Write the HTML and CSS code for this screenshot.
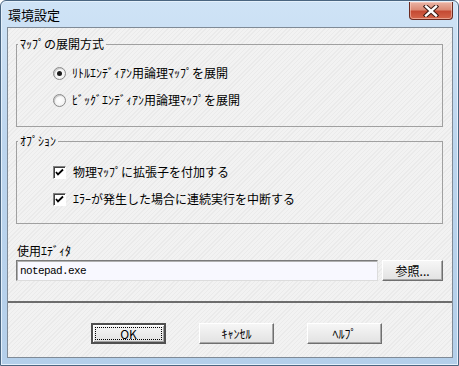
FILE: index.html
```html
<!DOCTYPE html>
<html lang="ja">
<head>
    <meta charset="UTF-8">
    <title>環境設定</title>
    <link rel="stylesheet" href="styles.css">
</head>
<body>
    <div class="window">
        <div class="titlebar">
            <span class="title">環境設定</span>
            <button class="close" aria-label="閉じる">
                <svg width="16" height="12" viewBox="0 0 16 12">
                    <path d="M3 1.5 L13 10.5 M13 1.5 L3 10.5" stroke="#3a1a14" stroke-width="4.4" stroke-linecap="square"/>
                    <path d="M3 1.5 L13 10.5 M13 1.5 L3 10.5" stroke="#fff" stroke-width="2.4" stroke-linecap="square"/>
                </svg>
            </button>
        </div>

        <div class="client">
            <div class="panel">
                <fieldset class="group">
                    <legend>ﾏｯﾌﾟの展開方式</legend>
                    <label class="option">
                        <span class="radio checked"></span>
                        ﾘﾄﾙｴﾝﾃﾞｨｱﾝ用論理ﾏｯﾌﾟを展開
                    </label>
                    <label class="option">
                        <span class="radio"></span>
                        ﾋﾞｯｸﾞｴﾝﾃﾞｨｱﾝ用論理ﾏｯﾌﾟを展開
                    </label>
                </fieldset>

                <fieldset class="group group-options">
                    <legend>ｵﾌﾟｼｮﾝ</legend>
                    <label class="option">
                        <span class="check">
                            <svg width="9" height="9" viewBox="0 0 9 9"><path d="M1 4 L3 6.5 L8 1.5" stroke="#000" stroke-width="1.8" fill="none"/></svg>
                        </span>
                        物理ﾏｯﾌﾟに拡張子を付加する
                    </label>
                    <label class="option">
                        <span class="check">
                            <svg width="9" height="9" viewBox="0 0 9 9"><path d="M1 4 L3 6.5 L8 1.5" stroke="#000" stroke-width="1.8" fill="none"/></svg>
                        </span>
                        ｴﾗｰが発生した場合に連続実行を中断する
                    </label>
                </fieldset>

                <div class="editor-label">使用ｴﾃﾞｨﾀ</div>
                <div class="editor-row">
                    <div class="textbox">notepad.exe</div>
                    <button class="btn btn-browse">参照...</button>
                </div>
            </div>

            <div class="actions">
                <button class="btn btn-default"><span class="focus">OK</span></button>
                <button class="btn">ｷｬﾝｾﾙ</button>
                <button class="btn">ﾍﾙﾌﾟ</button>
            </div>
        </div>
    </div>
</body>
</html>
```

FILE: styles.css
```css
body {
    margin: 0;
    padding: 0;
    font-family: "Noto Sans CJK JP", "Noto Sans", sans-serif;
    font-size: 12px;
    line-height: 14px;
    color: #000;
    background: #fff;
}

.window {
    width: 459px;
    height: 366px;
    box-sizing: border-box;
    display: flex;
    flex-direction: column;
    border: 1px solid #4a6580;
    border-radius: 6px 6px 0 0;
    background: linear-gradient(180deg, #cfe3f6 0%, #bcd5ee 40%, #b4cfea 100%);
    box-shadow: inset 0 0 0 1px #e4f0fb;
}

.titlebar {
    height: 26px;
    display: flex;
    align-items: flex-start;
    justify-content: space-between;
    padding: 0 5px 0 7px;
}

.title {
    margin-top: 7px;
    font-size: 13px;
    line-height: 14px;
}

.close {
    width: 44px;
    height: 18px;
    margin-top: 1px;
    padding: 0;
    border: 1px solid #6b2a20;
    border-top: none;
    border-radius: 0 0 4px 4px;
    background: linear-gradient(180deg, #e9b4a5 0%, #dc8b76 45%, #c54a33 55%, #d4664b 100%);
    box-shadow: inset 0 0 0 1px rgba(255, 220, 210, 0.5);
    display: flex;
    align-items: center;
    justify-content: center;
}

.client {
    flex: 1;
    margin: 0 5px 7px 6px;
    border: 1px solid #7f8a96;
    display: flex;
    flex-direction: column;
    background-color: #f0f0f0;
    background-image: repeating-linear-gradient(135deg, #f2f2f2 0px, #f2f2f2 2px, #eaeaea 2px, #eaeaea 3px);
}

.panel {
    height: 275px;
    box-sizing: border-box;
    padding: 9px 9px 0 8px;
    border-bottom: 2px solid #6d6d6d;
}

.group {
    margin: 0;
    padding: 15px 0 19px 0;
    border: 1px solid #a0a0a0;
    display: flex;
    flex-direction: column;
    gap: 13px;
}

.group legend {
    margin-left: 1px;
    padding: 0 2px 0 2px;
    line-height: 14px;
}

.group-options {
    margin-top: 7px;
    padding-top: 17px;
    padding-bottom: 17px;
}

.option {
    display: flex;
    align-items: center;
    gap: 4px;
    height: 14px;
    margin-left: 36px;
}

.radio {
    width: 11px;
    height: 11px;
    border-radius: 50%;
    border: 1px solid #8a8a8a;
    background: radial-gradient(circle, #fff 0%, #f4f4f4 60%, #dcdcdc 100%);
    box-shadow: inset 1px 1px 0 #c8c8c8;
    position: relative;
    margin-right: 2px;
}

.radio.checked::after {
    content: "";
    position: absolute;
    left: 3px;
    top: 3px;
    width: 5px;
    height: 5px;
    border-radius: 50%;
    background: #1b1b1b;
}

.check {
    width: 9px;
    height: 9px;
    padding: 1px;
    background: #fff;
    border: 1px solid;
    border-color: #808080 #ffffff #ffffff #808080;
    box-shadow: inset 1px 1px 0 #404040;
    display: flex;
    align-items: center;
    justify-content: center;
    margin-right: 3px;
}

.editor-label {
    margin-top: 20px;
    padding-left: 1px;
}

.editor-row {
    display: flex;
    gap: 4px;
    margin-top: 2px;
}

.textbox {
    width: 363px;
    height: 21px;
    box-sizing: border-box;
    padding: 3px 3px 0;
    background: #f8f8ff;
    border: 1px solid;
    border-color: #7a7a7a #dcdcdc #dcdcdc #7a7a7a;
    box-shadow: inset 1px 1px 0 #b0b0b0;
    font-family: "Liberation Mono", "DejaVu Sans Mono", monospace;
    font-size: 11px;
    letter-spacing: -0.6px;
    line-height: 14px;
}

.btn {
    width: 75px;
    height: 21px;
    padding: 0;
    box-sizing: border-box;
    font-family: inherit;
    font-size: 12px;
    line-height: 14px;
    color: #000;
    background: linear-gradient(180deg, #f6f6f6 0%, #ececec 50%, #e2e2e2 100%);
    border: 1px solid;
    border-color: #ffffff #6f6f6f #6f6f6f #ffffff;
    box-shadow: inset -1px -1px 0 #a8a8a8;
}

.btn-browse {
    width: 61px;
}

.actions {
    display: flex;
    gap: 33px;
    padding: 20px 0 0 83px;
}

.btn-default {
    border: 2px solid #505050;
    box-shadow: inset 1px 1px 0 #fff, inset -1px -1px 0 #a0a0a0;
    padding: 2px;
}

.focus {
    display: block;
    height: 100%;
    box-sizing: border-box;
    border: 1px dotted #000;
    line-height: 11px;
}
```
